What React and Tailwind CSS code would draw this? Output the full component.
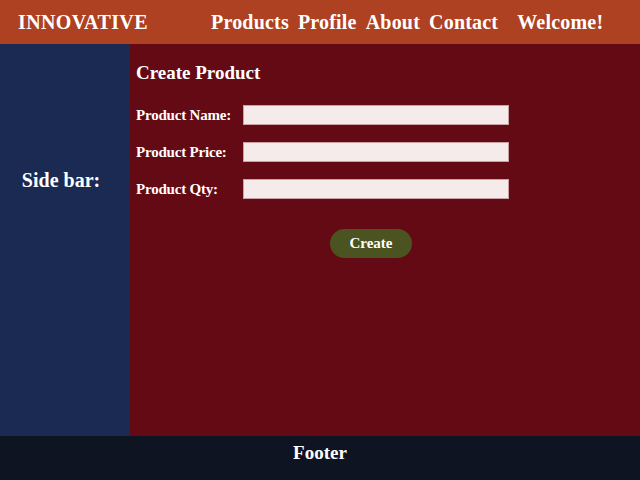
import React from 'react';

const navItems = ['Products', 'Profile', 'About', 'Contact'];

function Field({ label }) {
    return (
        <div className="flex items-center h-[20px]">
            <label className="w-[107px] text-[15px] font-bold tracking-[-0.2px]">{label}</label>
            <input type="text" className="w-[266px] h-[20px] bg-[#f6ebeb] border border-[#c9a3a3] outline-none" />
        </div>
    );
}

export default function App() {
    return (
        <div className="w-[640px] h-[480px] flex flex-col text-white font-['Liberation_Serif',serif]">
            <header className="h-[44px] bg-[#ad4122] flex items-center shrink-0">
                <div className="pl-[18px] w-[211px] text-[20px] font-bold tracking-[0.4px]">INNOVATIVE</div>
                <nav className="flex gap-[9px] text-[20px] font-bold tracking-[0.2px]">
                    {navItems.map((item) => (
                        <a key={item} className="cursor-pointer">{item}</a>
                    ))}
                </nav>
                <div className="ml-[19px] text-[20px] font-bold tracking-[0.2px]">Welcome!</div>
            </header>

            <div className="flex flex-1 min-h-0">
                <aside className="w-[130px] bg-[#1b2a52] flex justify-center pt-[123px] pr-[8px]">
                    <span className="text-[20px] font-bold leading-[26px]">Side bar:</span>
                </aside>

                <main className="flex-1 bg-[#640a14] pl-[6px] pt-[17px]">
                    <h2 className="text-[19px] font-bold leading-[24px]">Create Product</h2>
                    <div className="mt-[20px] flex flex-col gap-[17px]">
                        <Field label="Product Name:" />
                        <Field label="Product Price:" />
                        <Field label="Product Qty:" />
                    </div>
                    <button className="mt-[30px] ml-[194px] w-[82px] h-[29px] rounded-full bg-[#4b5320] text-[15px] font-bold">
                        Create
                    </button>
                </main>
            </div>

            <footer className="h-[44px] bg-[#0f1423] flex items-center justify-center shrink-0 pb-[9px]">
                <span className="text-[19px] font-bold">Footer</span>
            </footer>
        </div>
    );
}
